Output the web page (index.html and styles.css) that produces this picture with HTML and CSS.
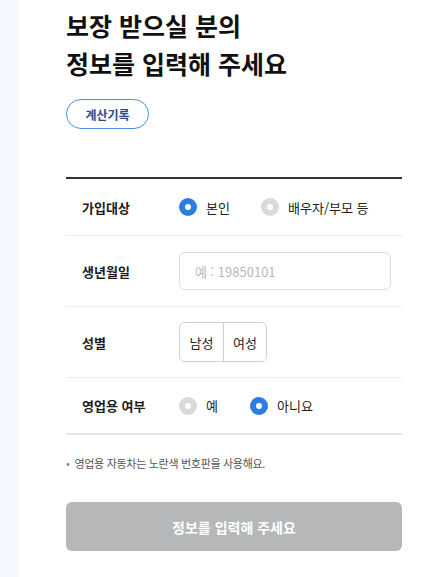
FILE: index.html
```html
<!DOCTYPE html>
<html lang="ko">
<head>
    <meta charset="UTF-8">
    <meta name="viewport" content="width=device-width, initial-scale=1.0">
    <title>보장 받으실 분의 정보</title>
    <link rel="stylesheet" href="styles.css">
</head>
<body>
    <div class="page">
        <aside class="side-strip"></aside>

        <main class="content">
            <h1 class="title">보장 받으실 분의<br>정보를 입력해 주세요</h1>
            <button class="history-btn">계산기록</button>

            <div class="form">
                <div class="row">
                    <span class="label">가입대상</span>
                    <div class="radios">
                        <label class="radio is-checked"><span class="dot"></span>본인</label>
                        <label class="radio"><span class="dot"></span>배우자/부모 등</label>
                    </div>
                </div>
                <div class="row row-tall">
                    <span class="label">생년월일</span>
                    <div class="field">
                        <input class="text-input" type="text" placeholder="예 : 19850101">
                    </div>
                </div>
                <div class="row row-tall">
                    <span class="label">성별</span>
                    <div class="segment">
                        <button class="seg-btn">남성</button>
                        <button class="seg-btn">여성</button>
                    </div>
                </div>
                <div class="row row-last">
                    <span class="label">영업용 여부</span>
                    <div class="radios">
                        <label class="radio radio-short"><span class="dot"></span>예</label>
                        <label class="radio is-checked"><span class="dot"></span>아니요</label>
                    </div>
                </div>
            </div>

            <p class="note">영업용 자동차는 노란색 번호판을 사용해요.</p>

            <button class="submit-btn" disabled>정보를 입력해 주세요</button>
        </main>
    </div>
</body>
</html>
```

FILE: styles.css
```css
/* --- Base --- */
:root {
    --blue: #2b7de1;
    --blue-border: #4a8fe6;
    --text-dark: #1c1c1c;
    --line-light: #ededed;
    --radius-sm: 6px;
}

html, body {
    margin: 0;
    padding: 0;
    height: 100%;
    background: #fff;
    font-family: "Noto Sans CJK KR", "Noto Sans", sans-serif;
    color: var(--text-dark);
}

.page {
    display: flex;
    min-height: 100%;
}

.side-strip {
    flex: 0 0 18px;
    background: #f3f7fe;
}

/* --- Main column --- */
.content {
    width: 336px;
    padding: 6px 0 0 48px;
}

.title {
    margin: 0;
    font-size: 25px;
    line-height: 38px;
    font-weight: 700;
    color: #111;
}

.history-btn {
    display: block;
    margin-top: 17px;
    width: 83px;
    height: 30px;
    border: 1px solid var(--blue-border);
    border-radius: 15px;
    background: #fff;
    color: #2d4b8e;
    font-family: inherit;
    font-size: 12px;
    font-weight: 700;
    padding: 0;
}

/* --- Form rows --- */
.form {
    margin-top: 48px;
    border-top: 2px solid #333;
}

.row {
    display: flex;
    align-items: center;
    height: 56px;
    border-bottom: 1px solid var(--line-light);
}

.row-tall {
    height: 70px;
}

.row-last {
    height: 55px;
    border-bottom: 2px solid #e6e6e6;
}

.label {
    width: 97px;
    padding-left: 16px;
    font-size: 13px;
    font-weight: 600;
}

.radios {
    display: flex;
    align-items: center;
}

.radio {
    display: flex;
    align-items: center;
    gap: 9px;
    min-width: 82px;
    white-space: nowrap;
    font-size: 13px;
    color: #222;
}

.radio-short {
    min-width: 71px;
}

.dot {
    flex-shrink: 0;
    width: 18px;
    height: 18px;
    border-radius: 50%;
    background: #dadada;
    display: flex;
    align-items: center;
    justify-content: center;
}

.dot::after {
    content: "";
    width: 6px;
    height: 6px;
    border-radius: 50%;
    background: #fff;
}

.is-checked .dot {
    background: var(--blue);
}

.text-input {
    box-sizing: border-box;
    width: 212px;
    height: 38px;
    border: 1px solid #dcdcdc;
    border-radius: var(--radius-sm);
    padding: 0 15px;
    font-family: inherit;
    font-size: 13px;
    outline: none;
}

.text-input::placeholder {
    color: #b9b9b9;
}

.segment {
    display: flex;
    height: 38px;
    border: 1px solid #cfcfcf;
    border-radius: var(--radius-sm);
    overflow: hidden;
}

.seg-btn {
    width: 43px;
    padding: 0;
    border: none;
    background: #fff;
    font-family: inherit;
    font-size: 13px;
    color: #222;
}

.seg-btn + .seg-btn {
    border-left: 1px solid #cfcfcf;
}

/* --- Footer --- */
.note {
    margin: 20px 0 0;
    font-size: 11px;
    color: #555;
    letter-spacing: -0.3px;
}

.note::before {
    content: "•";
    margin-right: 5px;
    color: #888;
}

.submit-btn {
    display: block;
    margin-top: 31px;
    width: 336px;
    height: 49px;
    border: none;
    border-radius: var(--radius-sm);
    background: #b6b7b9;
    color: #fff;
    font-family: inherit;
    font-size: 14px;
    font-weight: 700;
}
```
